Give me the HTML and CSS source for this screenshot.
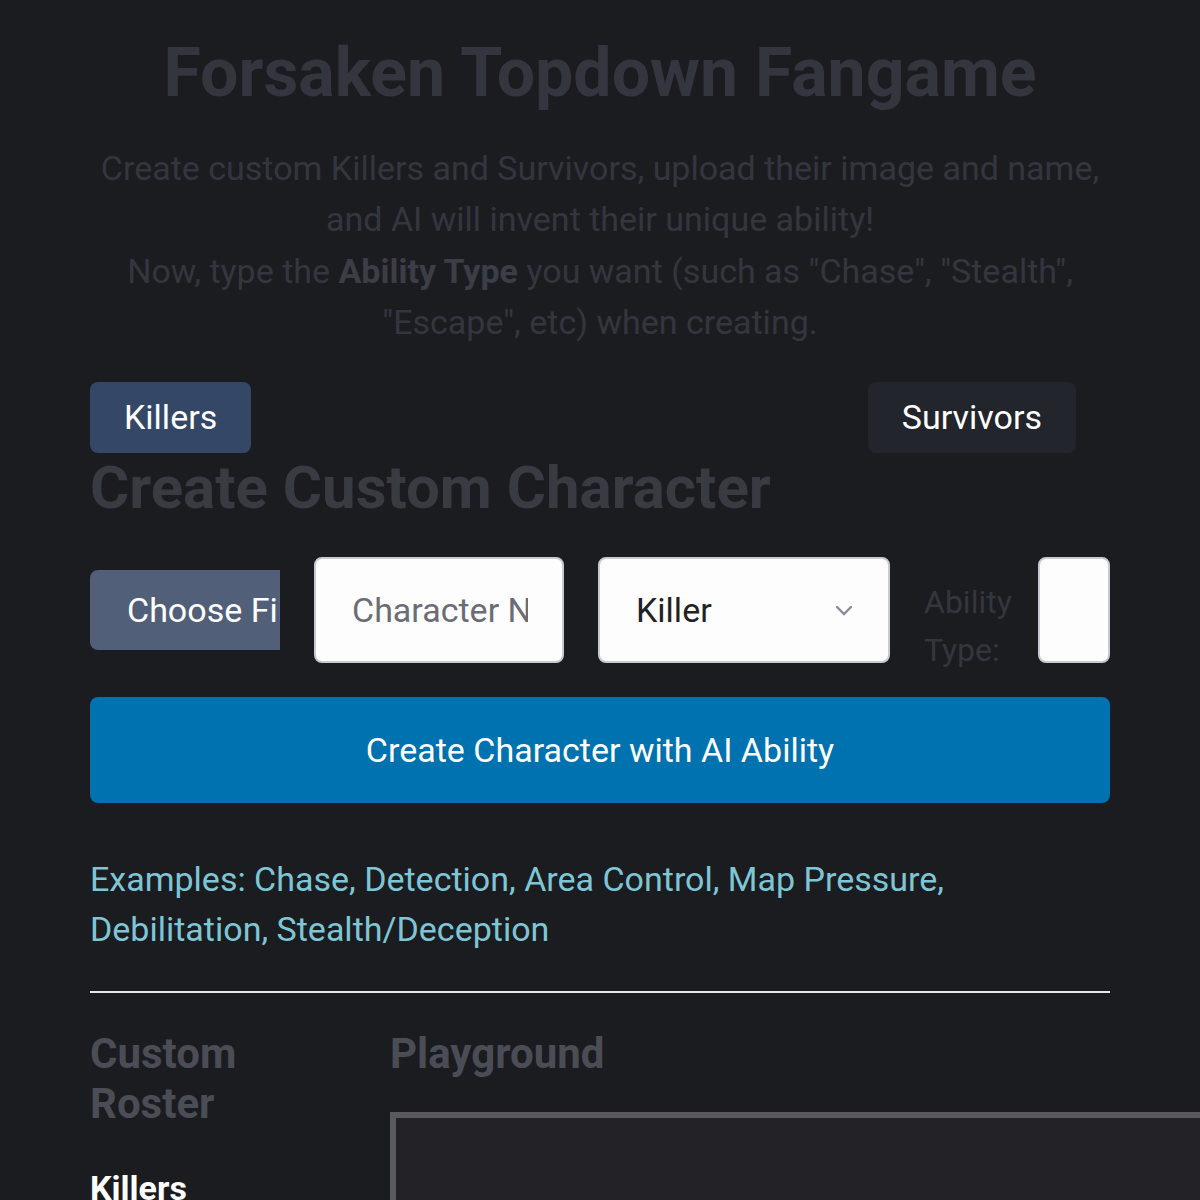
FILE: index.html
```html
<!DOCTYPE html>
<html lang="en">
<head>
  <meta charset="UTF-8">
  <title>Forsaken Topdown Fangame</title>
  <link rel="stylesheet" href="styles.css">
</head>
<body>
  <header class="intro">
    <h1>Forsaken Topdown Fangame</h1>
    <p>
      Create custom Killers and Survivors, upload their image and name, and AI will invent their unique ability!<br>
      Now, type the <b>Ability Type</b> you want (such as "Chase", "Stealth", "Escape", etc) when creating.
    </p>
  </header>

  <main class="wrap">
    <div class="tabs">
      <button class="tab active">Killers</button>
      <button class="tab">Survivors</button>
    </div>

    <h2 class="create-title">Create Custom Character</h2>

    <div class="form-row">
      <label class="file-pick"><span>Choose File</span></label>
      <input class="field name-field" type="text" placeholder="Character Name">
      <div class="select-box">
        <span>Killer</span>
        <svg width="24" height="24" viewBox="0 0 24 24"><path d="M5 9l7 7 7-7" fill="none" stroke="#8a8aa0" stroke-width="2.4" stroke-linecap="round"/></svg>
      </div>
      <label class="ability-label">Ability<br>Type:</label>
      <input class="field ability-field" type="text">
    </div>

    <button class="create-btn">Create Character with AI Ability</button>

    <p class="examples">Examples: Chase, Detection, Area Control, Map Pressure, Debilitation, Stealth/Deception</p>

    <hr>

    <section class="bottom">
      <div class="roster">
        <h2>Custom Roster</h2>
        <h3>Killers</h3>
      </div>
      <div class="playground">
        <h2>Playground</h2>
        <div class="arena"></div>
      </div>
    </section>
  </main>
</body>
</html>
```

FILE: styles.css
```css
html, body {
  overflow-x: hidden;
}
body {
  margin: 0;
  background: #1b1c20;
  color: #fff;
  font-family: Roboto, "Liberation Sans", sans-serif;
}
.intro {
  text-align: center;
  padding: 30px 90px 0;
}
.intro h1 {
  margin: 0;
  font-size: 68px;
  line-height: 86px;
  color: #33363e;
}
.intro p {
  margin: 27px 0 0;
  font-size: 34px;
  line-height: 51.3px;
  color: #33363e;
}
.intro b {
  color: #3b3e46;
}
.wrap {
  width: 1020px;
  margin: 0 auto;
}
.tabs {
  display: flex;
  justify-content: space-between;
  padding-right: 34px;
  margin-top: 34px;
}
.tab {
  font-family: inherit;
  font-size: 34px;
  line-height: 39px;
  padding: 16px 34px;
  border: none;
  border-radius: 8px;
  color: #fff;
  background: #22252b;
}
.tab.active {
  background: #344766;
}
.create-title {
  margin: 0;
  font-size: 60px;
  line-height: 70px;
  color: #383b42;
}
.form-row {
  display: flex;
  align-items: center;
  gap: 34px;
  margin-top: 34px;
}
.file-pick {
  width: 190px;
  height: 80px;
  overflow: hidden;
  white-space: nowrap;
  background: #525f79;
  border-radius: 8px 0 0 8px;
  font-size: 34px;
  line-height: 80px;
  padding-left: 37px;
  box-sizing: border-box;
}
.field {
  height: 106px;
  box-sizing: border-box;
  border: 2px solid #c9c9d3;
  border-radius: 8px;
  background: #fdfdfe;
  font-family: inherit;
  font-size: 34px;
  padding: 0 34px 0 36px;
}
.field::placeholder {
  color: #6b6c74;
}
.name-field {
  width: 250px;
}
.select-box {
  width: 292px;
  height: 106px;
  box-sizing: border-box;
  border: 2px solid #c9c9d3;
  border-radius: 8px;
  background: #fdfdfe;
  display: flex;
  align-items: center;
  justify-content: space-between;
  padding: 0 32px 0 36px;
  font-size: 34px;
  color: #222;
}
.ability-label {
  font-size: 32px;
  line-height: 48px;
  color: #33363e;
  margin: 16px -8px -16px 0;
}
.ability-field {
  width: 72px;
  padding: 0;
  margin-left: auto;
}
.create-btn {
  display: block;
  width: 100%;
  margin-top: 34px;
  padding: 34px 0;
  border: none;
  border-radius: 8px;
  background: #0072b0;
  color: #fff;
  font-family: inherit;
  font-size: 34px;
  line-height: 38px;
}
.examples {
  margin: 51px 0 0;
  font-size: 34px;
  line-height: 50px;
  color: #7ec6d6;
  padding-right: 120px;
}
hr {
  margin: 37px 0 0;
  border: none;
  border-top: 2px solid #e6e6e6;
}
.bottom {
  display: grid;
  grid-template-columns: 250px 1fr;
  column-gap: 50px;
  margin-top: 36px;
}
.bottom h2 {
  margin: 0;
  font-size: 42px;
  line-height: 50px;
  color: #4a4d56;
}
.roster h3 {
  margin: 38px 0 0;
  font-size: 34px;
  line-height: 42px;
  color: #fff;
}
.arena {
  margin-top: 33px;
  width: 900px;
  height: 400px;
  border: 6px solid #5a5a5c;
  background: #232327;
}
```
